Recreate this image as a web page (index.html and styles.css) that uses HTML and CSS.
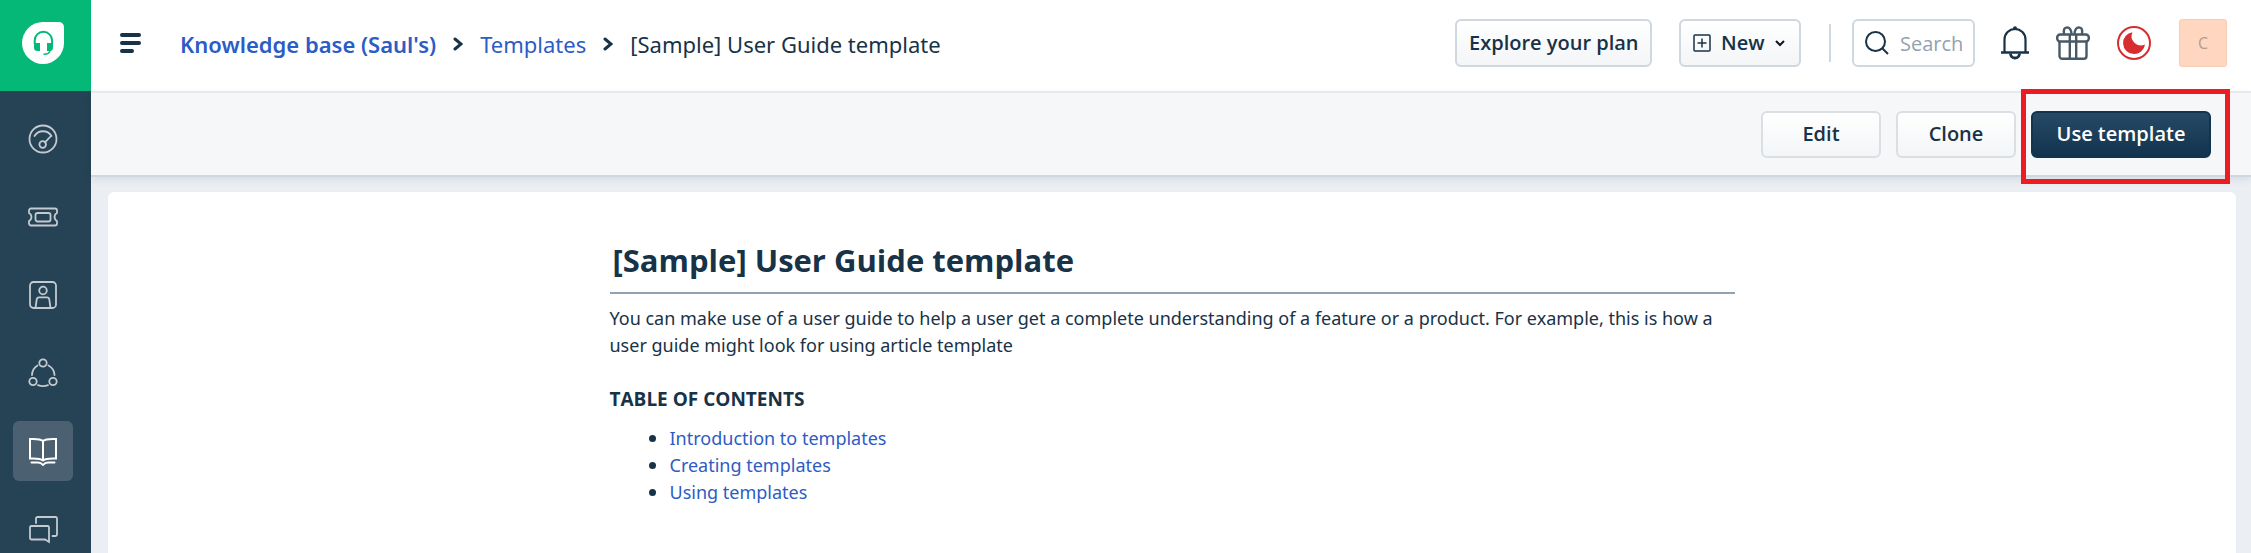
FILE: index.html
```html
<!DOCTYPE html>
<html lang="en">
<head>
    <meta charset="UTF-8">
    <meta name="viewport" content="width=device-width, initial-scale=1.0">
    <title>[Sample] User Guide template</title>
    <link rel="stylesheet" href="styles.css">
</head>
<body>
    <!-- Left navigation -->
    <aside class="sidebar">
        <a href="#" class="logo" aria-label="Home">
            <svg width="42" height="42" viewBox="0 0 42 42">
                <path d="M21 0H37a5 5 0 0 1 5 5V21A21 21 0 1 1 21 0z" fill="#fff"/>
                <path d="M12.700 22V18.500a8.700 8.700 0 0 1 17.400 0V22" fill="none" stroke="#05b878" stroke-width="2"/>
                <path d="M12 21h6v8h-2.500a3.500 3.500 0 0 1-3.500-3.500zM25 21h6v4.500a3.500 3.500 0 0 1-3.500 3.500H25z" fill="#05b878"/>
                <path d="M28 28c0 3-2 4.300-6.500 4.300" fill="none" stroke="#05b878" stroke-width="1.500"/>
            </svg>
        </a>
        <nav class="nav">
            <a href="#" class="nav-item" aria-label="Dashboard">
                <svg class="nav-icon" viewBox="0 0 30 30">
                    <circle cx="15" cy="15" r="13.500"/>
                    <path d="M6.500 12a10 10 0 0 1 17 0M22.500 12.500l-5.500 5.800"/>
                    <circle cx="14.700" cy="20.500" r="3.300"/>
                </svg>
            </a>
            <a href="#" class="nav-item" aria-label="Tickets">
                <svg class="nav-icon" viewBox="0 0 30 30">
                    <path d="M3 6.500H27a2 2 0 0 1 2 2v2.500a4.500 4.500 0 0 0 0 8v2.500a2 2 0 0 1-2 2H3a2 2 0 0 1-2-2V19a4.500 4.500 0 0 0 0-8V8.500a2 2 0 0 1 2-2z"/>
                    <rect x="7.500" y="11" width="15" height="8.500" rx="2"/>
                </svg>
            </a>
            <a href="#" class="nav-item" aria-label="Contacts">
                <svg class="nav-icon" viewBox="0 0 30 30">
                    <rect x="2" y="2" width="26" height="26" rx="3.500"/>
                    <circle cx="15" cy="10.500" r="3.800"/>
                    <path d="M7.500 28l1.200-8.500a2.500 2.500 0 0 1 2.500-2.200h7.600a2.500 2.500 0 0 1 2.500 2.200l1.200 8.500"/>
                </svg>
            </a>
            <a href="#" class="nav-item" aria-label="Social">
                <svg class="nav-icon" viewBox="0 0 30 30">
                    <circle cx="15" cy="5" r="3.700"/>
                    <circle cx="5" cy="23.500" r="3.700"/>
                    <circle cx="25" cy="23.500" r="3.700"/>
                    <path d="M9.500 7.500A11.500 11.500 0 0 0 4 17M20.500 7.500A11.500 11.500 0 0 1 26.500 17M10 27.200q5 1.800 10 0"/>
                </svg>
            </a>
            <a href="#" class="nav-item active" aria-label="Knowledge base">
                <svg class="nav-icon" viewBox="0 0 30 30">
                    <path d="M15 5Q12 2.500 2 3V22.500Q12 22 15 24.500Q18 22 28 22.500V3Q18 2.500 15 5zM15 5V24"/>
                    <path d="M3.500 26.500H10Q13 26.500 15 29Q17 26.500 20 26.500H26.500"/>
                </svg>
            </a>
            <a href="#" class="nav-item" aria-label="Forums">
                <svg class="nav-icon" viewBox="0 0 30 30">
                    <path d="M8 9V4.500A1.500 1.500 0 0 1 9.500 3H27.500A1.500 1.500 0 0 1 29 4.500V20.500A1.500 1.500 0 0 1 27.500 22H24.500"/>
                    <path d="M3.500 12H19.500A1.500 1.500 0 0 1 21 13.500V28L17 25.500H3.500A1.500 1.500 0 0 1 2 24V13.500A1.500 1.500 0 0 1 3.500 12z"/>
                </svg>
            </a>
        </nav>
    </aside>

    <div class="main">
        <!-- Top bar -->
        <header class="topbar">
            <button type="button" class="icon-btn menu-btn" aria-label="Menu">
                <svg width="21" height="20" viewBox="0 0 21 20" fill="none" stroke="#183247" stroke-width="4" stroke-linecap="round">
                    <path d="M2 2H19M2 10H19M2 18H12"/>
                </svg>
            </button>
            <nav class="breadcrumb" aria-label="Breadcrumb">
                <a href="#" class="crumb-root">Knowledge base (Saul's)</a>
                <svg class="crumb-arrow" viewBox="0 0 10 14"><path d="M2 2l6 5-6 5"/></svg>
                <a href="#">Templates</a>
                <svg class="crumb-arrow" viewBox="0 0 10 14"><path d="M2 2l6 5-6 5"/></svg>
                <span>[Sample] User Guide template</span>
            </nav>
            <div class="tools">
                <button type="button" class="btn btn-plan">Explore your plan</button>
                <button type="button" class="btn btn-new">
                    <svg width="18" height="18" viewBox="0 0 18 18" fill="none" stroke="#183247" stroke-width="1.500">
                        <rect x="1" y="1" width="16" height="16" rx="1"/>
                        <path d="M9 4.500v9M4.500 9h9"/>
                    </svg>
                    New
                    <svg class="caret" width="10" height="7" viewBox="0 0 10 7" fill="none" stroke="#12161a" stroke-width="2">
                        <path d="M1 1l4 4 4-4"/>
                    </svg>
                </button>
                <span class="divider"></span>
                <label class="search">
                    <svg width="24" height="24" viewBox="0 0 24 24" fill="none" stroke="#183247" stroke-width="2">
                        <circle cx="10.500" cy="10.500" r="9.500"/>
                        <path d="M17 17l6 6"/>
                    </svg>
                    <input type="text" placeholder="Search" aria-label="Search">
                </label>
                <button type="button" class="icon-btn bell" aria-label="Notifications">
                    <svg width="28" height="34" viewBox="0 0 28 34" fill="none" stroke="#183247" stroke-width="2.200">
                        <path d="M3.500 26V13.500a10.500 10.500 0 0 1 21 0V26" />
                        <path d="M0 26.500H28" stroke-width="2.500"/>
                        <path d="M9.500 27.500a4.500 4.500 0 0 0 9 0" stroke-width="2.800"/>
                        <circle cx="14" cy="2.200" r="2" fill="#183247" stroke="none"/>
                    </svg>
                </button>
                <button type="button" class="icon-btn gift" aria-label="What's new">
                    <svg width="34" height="34" viewBox="0 0 34 34" fill="none" stroke="#475867" stroke-width="2.400">
                        <rect x="1.200" y="8.500" width="31.600" height="7" rx="3"/>
                        <path d="M3.500 15.500V30a2.800 2.800 0 0 0 2.800 2.800H27.700a2.800 2.800 0 0 0 2.800-2.800V15.500"/>
                        <path d="M13.800 8V33M20.200 8V33"/>
                        <path d="M8 8Q7 1.500 11 1.400Q15 1.500 15.500 8M26 8Q27 1.500 23 1.400Q19 1.500 18.500 8"/>
                    </svg>
                </button>
                <button type="button" class="icon-btn moon" aria-label="Freddy">
                    <svg width="34" height="34" viewBox="0 0 34 34">
                        <circle cx="17" cy="17" r="16" fill="none" stroke="#d72d30" stroke-width="2"/>
                        <path d="M15.500 6.200A11 11 0 1 0 28 18.500A9.300 9.300 0 0 1 15.500 6.200z" fill="#d72d30"/>
                    </svg>
                </button>
                <button type="button" class="avatar">C</button>
            </div>
        </header>

        <!-- Page actions -->
        <div class="actions">
            <button type="button" class="btn">Edit</button>
            <button type="button" class="btn">Clone</button>
            <div class="highlight">
                <button type="button" class="btn btn-primary">Use template</button>
            </div>
        </div>

        <!-- Template preview -->
        <main class="card">
            <article class="article">
                <h1>[Sample] User Guide template</h1>
                <p>You can make use of a user guide to help a user get a complete understanding of a feature or a product. For example, this is how a user guide might look for using article template</p>
                <h2>TABLE OF CONTENTS</h2>
                <ul>
                    <li><a href="#">Introduction to templates</a></li>
                    <li><a href="#">Creating templates</a></li>
                    <li><a href="#">Using templates</a></li>
                </ul>
            </article>
        </main>
    </div>
</body>
</html>
```
FILE: styles.css
```css
* {
    box-sizing: border-box;
}

body {
    margin: 0;
    display: flex;
    height: 100vh;
    overflow: hidden;
    font-family: "Noto Sans", "Open Sans", sans-serif;
    font-size: 18px;
    color: #183247;
    background-color: #ebeef3;
}

a {
    color: #2c5cc5;
    text-decoration: none;
}

button, input {
    font-family: "Open Sans", "Noto Sans", sans-serif;
    color: inherit;
}

svg {
    display: block;
    flex-shrink: 0;
}

/* Sidebar */
.sidebar {
    flex: 0 0 91px;
    background-color: #264255;
    overflow: hidden;
}

.logo {
    display: flex;
    align-items: center;
    height: 91px;
    padding: 0 22px 5px;
    background-color: #05b878;
}

.nav {
    display: flex;
    flex-direction: column;
    gap: 18px;
    padding: 18px 13px;
}

.nav-item {
    display: flex;
    align-items: center;
    justify-content: center;
    width: 60px;
    height: 60px;
    border-radius: 6px;
}

.nav-item.active {
    background-color: #4b6071;
}

.nav-icon {
    width: 30px;
    height: 30px;
    fill: none;
    stroke: #c3cad0;
    stroke-width: 1.8;
    stroke-linecap: round;
}

.active .nav-icon {
    stroke: #fff;
    stroke-width: 2;
}

/* Top bar */
.main {
    flex: 1;
    min-width: 0;
    display: flex;
    flex-direction: column;
}

.topbar {
    display: flex;
    align-items: center;
    height: 93px;
    padding: 0 24px 5px 29px;
    background-color: #fff;
    border-bottom: 2px solid #ebeef0;
}

.icon-btn {
    padding: 0;
    border: none;
    background: none;
    cursor: pointer;
}

.breadcrumb {
    display: flex;
    align-items: center;
    gap: 17px;
    margin-left: 39px;
    padding-top: 2px;
    font-size: 22px;
    line-height: 30px;
    white-space: nowrap;
}

.crumb-root {
    font-weight: 600;
}

.crumb-arrow {
    width: 10px;
    height: 14px;
    fill: none;
    stroke: #183247;
    stroke-width: 3;
    stroke-linecap: round;
}

.tools {
    display: flex;
    align-items: center;
    margin-left: auto;
}

.btn {
    min-width: 120px;
    height: 47px;
    padding: 0 12px;
    border: 2px solid #dadfe3;
    border-radius: 6px;
    background: linear-gradient(#fff, #f3f5f7);
    font-size: 20px;
    font-weight: 600;
    line-height: 28px;
    white-space: nowrap;
    cursor: pointer;
}

.btn-plan, .btn-new {
    height: 48px;
    border-color: #cfd7df;
}

.btn-plan {
    width: 197px;
}

.btn-new {
    display: flex;
    align-items: center;
    gap: 10px;
    width: 122px;
    margin-left: 27px;
}

.divider {
    width: 2px;
    height: 38px;
    margin: 0 21px 0 28px;
    background-color: #cfd7df;
}

.search {
    display: flex;
    align-items: center;
    gap: 11px;
    width: 123px;
    height: 48px;
    padding: 0 11px;
    border: 2px solid #cfd7df;
    border-radius: 6px;
}

.search input {
    width: 100%;
    min-width: 0;
    padding: 0;
    border: none;
    outline: none;
    background: none;
    font-size: 20px;
}

.search input::placeholder {
    color: #92a2b1;
}

.bell {
    margin-left: 26px;
}

.gift {
    margin-left: 27px;
}

.moon {
    margin-left: 27px;
}

.avatar {
    width: 48px;
    height: 48px;
    margin-left: 28px;
    padding: 0;
    border: 1px solid #f8cdb5;
    border-radius: 3px;
    background-color: #ffd6c0;
    color: #b79a8c;
    font-size: 16px;
    cursor: pointer;
}

/* Page actions */
.actions {
    position: relative;
    display: flex;
    align-items: center;
    justify-content: flex-end;
    gap: 15px;
    height: 84px;
    padding-right: 40px;
    background-color: #f5f7f9;
    border-bottom: 2px solid #cfd7df;
    box-shadow: 0 2px 8px rgba(24, 50, 71, 0.1);
}

.btn-primary {
    width: 180px;
    border-color: #12344d;
    background: linear-gradient(#264966, #12344d);
    color: #fff;
}

.highlight {
    position: relative;
}

/* Red frame around the main action */
.highlight::after {
    content: "";
    position: absolute;
    inset: -22px -19px -26px -10px;
    border: 5px solid #ed1c24;
    pointer-events: none;
}

/* Article */
.card {
    flex: 1;
    margin: 15px 15px 0 17px;
    padding: 44px 24px 0;
    background-color: #fff;
    border-radius: 6px 6px 0 0;
}

.article {
    max-width: 1125px;
    margin: 0 auto;
}

h1 {
    margin: 0;
    padding: 0 3px 8px;
    border-bottom: 2px solid #92a2b1;
    font-family: "Open Sans", "Noto Sans", sans-serif;
    font-size: 31px;
    font-weight: 700;
    line-height: 48px;
}

p {
    margin: 11px 0 27px;
    line-height: 27px;
}

h2 {
    margin: 0;
    font-family: "Open Sans", "Noto Sans", sans-serif;
    font-size: 19px;
    font-weight: 700;
    line-height: 27px;
}

ul {
    margin: 12px 0 0;
    padding-left: 39px;
    line-height: 27px;
    list-style: none;
}

li {
    display: flex;
    align-items: center;
    gap: 14px;
}

li::before {
    content: "";
    width: 7px;
    height: 7px;
    border-radius: 50%;
    background-color: #183247;
}
```
